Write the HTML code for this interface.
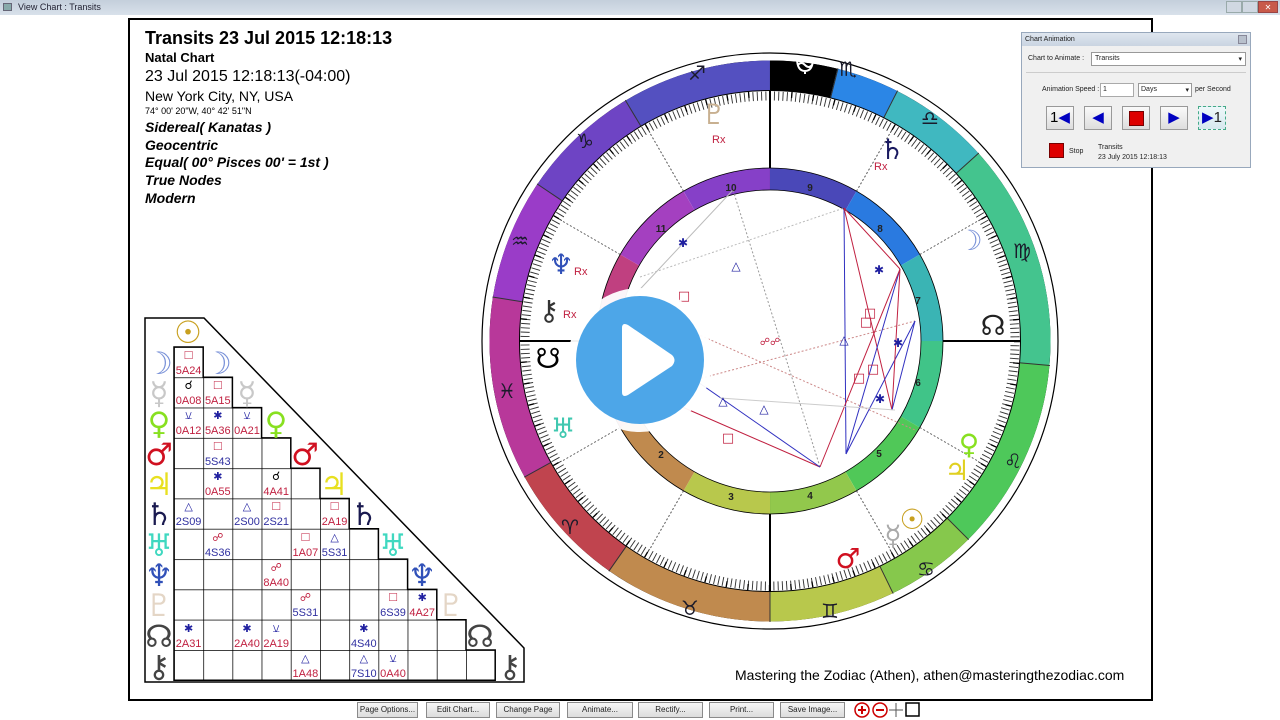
<!DOCTYPE html>
<html><head><meta charset="utf-8"><style>
*{margin:0;padding:0;box-sizing:border-box}
body{width:1280px;height:720px;overflow:hidden;background:#fff;font-family:"Liberation Sans",sans-serif;position:relative}
.tb{position:absolute;left:0;top:0;width:1280px;height:15px;background:linear-gradient(#c4cfdb,#d8e1ea);font-size:9px;color:#223;line-height:15px;padding-left:18px}
.frame{position:absolute;left:128px;top:18px;width:1025px;height:683px;border:2px solid #000}
.hd{position:absolute;left:145px;color:#000;white-space:nowrap}
.btn{position:absolute;top:702px;height:16px;border:1px solid #8a8a8a;background:linear-gradient(#f6f6f6,#dcdcdc);font-size:8px;line-height:14px;text-align:center;color:#222}
.pan{position:absolute;left:1021px;top:32px;width:230px;height:136px;background:#f0f0f0;border:1px solid #98a8bc;font-size:7px;color:#222}
</style></head><body>
<div class="tb">View Chart : Transits</div>
<div style="position:absolute;left:3px;top:3px;width:9px;height:8px;background:#8aa;border:1px solid #667"></div>
<div style="position:absolute;left:1226px;top:1px;width:16px;height:12px;background:#d0d8e2;border:1px solid #9aa"></div>
<div style="position:absolute;left:1242px;top:1px;width:16px;height:12px;background:#d0d8e2;border:1px solid #9aa"></div>
<div style="position:absolute;left:1258px;top:1px;width:20px;height:12px;background:#c85a4a;border:1px solid #944;color:#fff;font-size:8px;text-align:center;line-height:11px">✕</div>
<div class="frame"></div>

<div class="hd" style="top:28px;font-size:18px;font-weight:bold">Transits 23 Jul 2015 12:18:13</div>
<div class="hd" style="top:50px;font-size:13px;font-weight:bold">Natal Chart</div>
<div class="hd" style="top:68px;font-size:16px">23 Jul 2015 12:18:13(-04:00)</div>
<div class="hd" style="top:88px;font-size:14px">New York City, NY, USA</div>
<div class="hd" style="top:106px;font-size:9px">74° 00' 20"W, 40° 42' 51"N</div>
<div class="hd" style="top:119px;font-size:14px;font-weight:bold;font-style:italic">Sidereal( Kanatas )</div>
<div class="hd" style="top:137px;font-size:14px;font-weight:bold;font-style:italic">Geocentric</div>
<div class="hd" style="top:154px;font-size:14px;font-weight:bold;font-style:italic">Equal( 00° Pisces 00' = 1st )</div>
<div class="hd" style="top:172px;font-size:14px;font-weight:bold;font-style:italic">True Nodes</div>
<div class="hd" style="top:190px;font-size:14px;font-weight:bold;font-style:italic">Modern</div>

<svg width="1280" height="720" style="position:absolute;left:0;top:0" font-family="DejaVu Sans, sans-serif">
<defs>
<pattern id="g" patternUnits="userSpaceOnUse" x="174" y="347" width="29.2" height="30.3"><path d="M0 0H29.2M0 0V30.3" stroke="#000" stroke-width="1.5" fill="none"/></pattern>
</defs>
<polygon points="145,318 204,318 524,648 524,682 145,682" fill="#fff" stroke="#000" stroke-width="1.5"/>
<polygon points="174,347 203.2,347 203.2,377.3 232.4,377.3 232.4,407.6 261.6,407.6 261.6,437.9 290.8,437.9 290.8,468.2 320,468.2 320,498.5 349.2,498.5 349.2,528.8 378.4,528.8 378.4,559.1 407.6,559.1 407.6,589.4 436.8,589.4 436.8,619.7 466,619.7 466,650 495.2,650 495.2,680.3 174,680.3" fill="url(#g)" stroke="#000" stroke-width="1.5"/>
<g font-size="31" text-anchor="middle" font-weight="bold">
<text x="188" y="343" fill="#c8a020">☉</text>
<text x="159" y="374" fill="#7a92d8">☽</text><text x="218" y="374" fill="#7a92d8">☽</text>
<text x="159" y="404" fill="#c8c8c8">☿</text><text x="247" y="404" fill="#c8c8c8">☿</text>
<text x="159" y="434" fill="#88e020">♀</text><text x="276" y="434" fill="#88e020">♀</text>
<text x="159" y="465" fill="#d01020">♂</text><text x="305" y="465" fill="#d01020">♂</text>
<text x="159" y="495" fill="#e8e020">♃</text><text x="334" y="495" fill="#e8e020">♃</text>
<text x="159" y="525" fill="#1a1a50">♄</text><text x="364" y="525" fill="#1a1a50">♄</text>
<text x="159" y="556" fill="#40d8c0">♅</text><text x="393" y="556" fill="#40d8c0">♅</text>
<text x="159" y="586" fill="#3050b8">♆</text><text x="422" y="586" fill="#3050b8">♆</text>
<text x="159" y="616" fill="#e4d6c6">♇</text><text x="451" y="616" fill="#e4d6c6">♇</text>
<text x="159" y="647" fill="#444">☊</text><text x="480" y="647" fill="#444">☊</text>
<text x="159" y="677" fill="#444">⚷</text><text x="510" y="677" fill="#444">⚷</text>
</g>
<g font-size="11" text-anchor="middle" font-family="Liberation Sans, sans-serif">
<text x="188.6" y="359" fill="#c02040" font-size="13">□</text><text x="188.6" y="374" fill="#c02040">5A24</text>
<text x="188.6" y="389" fill="#000" font-size="12">☌</text><text x="188.6" y="404" fill="#c02040">0A08</text>
<text x="217.8" y="389" fill="#c02040" font-size="13">□</text><text x="217.8" y="404" fill="#c02040">5A15</text>
<text x="188.6" y="419" fill="#2020a0">⚺</text><text x="188.6" y="434" fill="#c02040">0A12</text>
<text x="217.8" y="419" fill="#2020a0">✱</text><text x="217.8" y="434" fill="#c02040">5A36</text>
<text x="247" y="419" fill="#2020a0">⚺</text><text x="247" y="434" fill="#c02040">0A21</text>
<text x="217.8" y="450" fill="#c02040" font-size="13">□</text><text x="217.8" y="465" fill="#3030a0">5S43</text>
<text x="217.8" y="480" fill="#2020a0">✱</text><text x="217.8" y="495" fill="#c02040">0A55</text>
<text x="276.2" y="480" fill="#000" font-size="12">☌</text><text x="276.2" y="495" fill="#c02040">4A41</text>
<text x="188.6" y="510" fill="#2020a0">△</text><text x="188.6" y="525" fill="#3030a0">2S09</text>
<text x="247" y="510" fill="#2020a0">△</text><text x="247" y="525" fill="#3030a0">2S00</text>
<text x="276.2" y="510" fill="#c02040" font-size="13">□</text><text x="276.2" y="525" fill="#3030a0">2S21</text>
<text x="334.6" y="510" fill="#c02040" font-size="13">□</text><text x="334.6" y="525" fill="#c02040">2A19</text>
<text x="217.8" y="541" fill="#c02040">☍</text><text x="217.8" y="556" fill="#3030a0">4S36</text>
<text x="305.4" y="541" fill="#c02040" font-size="13">□</text><text x="305.4" y="556" fill="#c02040">1A07</text>
<text x="334.6" y="541" fill="#2020a0">△</text><text x="334.6" y="556" fill="#3030a0">5S31</text>
<text x="276.2" y="571" fill="#c02040">☍</text><text x="276.2" y="586" fill="#c02040">8A40</text>
<text x="305.4" y="601" fill="#c02040">☍</text><text x="305.4" y="616" fill="#3030a0">5S31</text>
<text x="393" y="601" fill="#c02040" font-size="13">□</text><text x="393" y="616" fill="#3030a0">6S39</text>
<text x="422.2" y="601" fill="#2020a0">✱</text><text x="422.2" y="616" fill="#c02040">4A27</text>
<text x="188.6" y="632" fill="#2020a0">✱</text><text x="188.6" y="647" fill="#c02040">2A31</text>
<text x="247" y="632" fill="#2020a0">✱</text><text x="247" y="647" fill="#c02040">2A40</text>
<text x="276.2" y="632" fill="#2020a0">⚺</text><text x="276.2" y="647" fill="#c02040">2A19</text>
<text x="363.8" y="632" fill="#2020a0">✱</text><text x="363.8" y="647" fill="#3030a0">4S40</text>
<text x="305.4" y="662" fill="#2020a0">△</text><text x="305.4" y="677" fill="#c02040">1A48</text>
<text x="363.8" y="662" fill="#2020a0">△</text><text x="363.8" y="677" fill="#3030a0">7S10</text>
<text x="393" y="662" fill="#2020a0">⚺</text><text x="393" y="677" fill="#c02040">0A40</text>
</g>

<g transform="translate(770,341)">
<circle r="288" fill="#fff" stroke="#000" stroke-width="1.2"/>
<circle r="280" fill="none" stroke="#000" stroke-width="1"/>
<g fill="none" stroke-width="30">
<circle r="265.5" pathLength="360" stroke="#000" stroke-dasharray="14 346" transform="rotate(-90)"/>
<circle r="265.5" pathLength="360" stroke="#2b86e6" stroke-dasharray="13 347" transform="rotate(-76)"/>
<circle r="265.5" pathLength="360" stroke="#40b8c0" stroke-dasharray="21 339" transform="rotate(-63)"/>
<circle r="265.5" pathLength="360" stroke="#44c48e" stroke-dasharray="47 313" transform="rotate(-42)"/>
<circle r="265.5" pathLength="360" stroke="#4ec85a" stroke-dasharray="40 320" transform="rotate(5)"/>
<circle r="265.5" pathLength="360" stroke="#86c84c" stroke-dasharray="19 341" transform="rotate(45)"/>
<circle r="265.5" pathLength="360" stroke="#b8c84c" stroke-dasharray="26 334" transform="rotate(64)"/>
<circle r="265.5" pathLength="360" stroke="#c08a4e" stroke-dasharray="35 325" transform="rotate(90)"/>
<circle r="265.5" pathLength="360" stroke="#c0444e" stroke-dasharray="26 334" transform="rotate(125)"/>
<circle r="265.5" pathLength="360" stroke="#b8389a" stroke-dasharray="38 322" transform="rotate(151)"/>
<circle r="265.5" pathLength="360" stroke="#9a3cc8" stroke-dasharray="25 335" transform="rotate(-171)"/>
<circle r="265.5" pathLength="360" stroke="#6e44c4" stroke-dasharray="25 335" transform="rotate(-146)"/>
<circle r="265.5" pathLength="360" stroke="#5450c0" stroke-dasharray="31 329" transform="rotate(-121)"/>
</g>
<g stroke="#333" stroke-width="1">
<line x1="250" y1="0" x2="281" y2="0" transform="rotate(-76)"/>
<line x1="250" y1="0" x2="281" y2="0" transform="rotate(-63)"/><line x1="250" y1="0" x2="281" y2="0" transform="rotate(-42)"/>
<line x1="250" y1="0" x2="281" y2="0" transform="rotate(5)"/><line x1="250" y1="0" x2="281" y2="0" transform="rotate(45)"/>
<line x1="250" y1="0" x2="281" y2="0" transform="rotate(64)"/><line x1="250" y1="0" x2="281" y2="0" transform="rotate(90)"/>
<line x1="250" y1="0" x2="281" y2="0" transform="rotate(125)"/><line x1="250" y1="0" x2="281" y2="0" transform="rotate(151)"/>
<line x1="250" y1="0" x2="281" y2="0" transform="rotate(-171)"/><line x1="250" y1="0" x2="281" y2="0" transform="rotate(-146)"/>
<line x1="250" y1="0" x2="281" y2="0" transform="rotate(-121)"/>
</g>
<circle r="250.5" fill="#fff" stroke="#000" stroke-width="1"/>
<circle r="245" pathLength="360" fill="none" stroke="#333" stroke-width="9" stroke-dasharray="0.22 0.78"/>
<circle r="247" pathLength="72" fill="none" stroke="#000" stroke-width="6" stroke-dasharray="0.06 0.94"/>
<circle r="240" fill="#fff"/>
<g stroke="#555" stroke-width="1" stroke-dasharray="2 2">
<line x1="173" y1="0" x2="240" y2="0" transform="rotate(30)"/><line x1="173" y1="0" x2="240" y2="0" transform="rotate(60)"/>
<line x1="173" y1="0" x2="240" y2="0" transform="rotate(120)"/><line x1="173" y1="0" x2="240" y2="0" transform="rotate(150)"/>
<line x1="173" y1="0" x2="240" y2="0" transform="rotate(-30)"/><line x1="173" y1="0" x2="240" y2="0" transform="rotate(-60)"/>
<line x1="173" y1="0" x2="240" y2="0" transform="rotate(-120)"/><line x1="173" y1="0" x2="240" y2="0" transform="rotate(-150)"/>
</g>
<g stroke="#000" stroke-width="2"><line x1="0" y1="-250" x2="0" y2="250"/><line x1="-250" y1="0" x2="250" y2="0"/></g>
<g fill="none" stroke-width="22">
<circle r="162" pathLength="360" stroke="#4a48b8" stroke-dasharray="30 330" transform="rotate(-90)"/>
<circle r="162" pathLength="360" stroke="#2a7ae0" stroke-dasharray="30 330" transform="rotate(-60)"/>
<circle r="162" pathLength="360" stroke="#3ab4b4" stroke-dasharray="30 330" transform="rotate(-30)"/>
<circle r="162" pathLength="360" stroke="#40c488" stroke-dasharray="30 330" transform="rotate(0)"/>
<circle r="162" pathLength="360" stroke="#50c858" stroke-dasharray="30 330" transform="rotate(30)"/>
<circle r="162" pathLength="360" stroke="#92c84c" stroke-dasharray="30 330" transform="rotate(60)"/>
<circle r="162" pathLength="360" stroke="#b8c84c" stroke-dasharray="30 330" transform="rotate(90)"/>
<circle r="162" pathLength="360" stroke="#c08a4e" stroke-dasharray="30 330" transform="rotate(120)"/>
<circle r="162" pathLength="360" stroke="#c0445a" stroke-dasharray="30 330" transform="rotate(150)"/>
<circle r="162" pathLength="360" stroke="#c04080" stroke-dasharray="30 330" transform="rotate(180)"/>
<circle r="162" pathLength="360" stroke="#a440c0" stroke-dasharray="30 330" transform="rotate(210)"/>
<circle r="162" pathLength="360" stroke="#8640c8" stroke-dasharray="30 330" transform="rotate(240)"/>
</g>
<circle r="173" fill="none" stroke="#000" stroke-width="0.8"/>
<circle r="151" fill="#fff" stroke="#000" stroke-width="0.8"/>
</g>
<g stroke-width="1" fill="none">
<line x1="820" y1="467" x2="733" y2="190" stroke="#999" stroke-dasharray="2 2"/>
<line x1="640" y1="277" x2="844" y2="208" stroke="#bbb" stroke-dasharray="2 2"/>
<line x1="620" y1="400" x2="915" y2="321" stroke="#c88" stroke-dasharray="2 2"/>
<line x1="620" y1="300" x2="915" y2="430" stroke="#c88" stroke-dasharray="2 2"/>
<line x1="733" y1="190" x2="630" y2="300" stroke="#bbb"/>
<line x1="844" y1="208" x2="846" y2="454" stroke="#3030c0"/>
<line x1="844" y1="208" x2="892" y2="410" stroke="#c02040"/>
<line x1="844" y1="208" x2="900" y2="269" stroke="#c02040"/>
<line x1="900" y1="269" x2="846" y2="454" stroke="#3030c0"/>
<line x1="915" y1="321" x2="846" y2="454" stroke="#3030c0"/>
<line x1="900" y1="269" x2="892" y2="410" stroke="#c02040"/>
<line x1="900" y1="269" x2="820" y2="467" stroke="#c02040"/>
<line x1="915" y1="321" x2="892" y2="410" stroke="#3030c0"/>
<line x1="680" y1="406" x2="820" y2="467" stroke="#c02040"/>
<line x1="695" y1="380" x2="820" y2="467" stroke="#3030c0"/>
<line x1="720" y1="398" x2="895" y2="410" stroke="#ccc"/>
</g>
<g font-size="12" text-anchor="middle">
<text x="684" y="300" fill="#c02040" font-size="13">□</text><text x="870" y="317" fill="#c02040" font-size="13">□</text>
<text x="866" y="326" fill="#c02040" font-size="13">□</text><text x="873" y="373" fill="#c02040" font-size="13">□</text>
<text x="859" y="382" fill="#c02040" font-size="13">□</text><text x="728" y="442" fill="#c02040" font-size="13">□</text>
<text x="736" y="270" fill="#2020a0">△</text><text x="844" y="344" fill="#2020a0">△</text>
<text x="723" y="405" fill="#2020a0">△</text><text x="764" y="413" fill="#2020a0">△</text>
<text x="683" y="247" fill="#2020a0">✱</text><text x="879" y="274" fill="#2020a0">✱</text>
<text x="898" y="347" fill="#2020a0">✱</text><text x="880" y="403" fill="#2020a0">✱</text>
<text x="770" y="345" fill="#c02040" font-size="10">☍☍</text>
</g>
<g font-size="10" font-weight="bold" text-anchor="middle" fill="#222" font-family="Liberation Sans, sans-serif">
<text x="731" y="191">10</text><text x="810" y="191">9</text><text x="880" y="232">8</text><text x="918" y="304">7</text>
<text x="918" y="386">6</text><text x="879" y="457">5</text><text x="810" y="499">4</text><text x="731" y="500">3</text>
<text x="661" y="458">2</text><text x="661" y="232">11</text>
</g>
<!-- ophiuchus icon -->
<path d="M797 58 Q797 71 805 71 Q813 71 813 58 M798 65 Q801 61 805 65 Q809 69 812 65 M805 71 V74" stroke="#fff" stroke-width="2" fill="none"/>
<g font-size="20" font-weight="bold" text-anchor="middle" fill="#1a1a2a">
<text x="697" y="80">♐&#xFE0E;</text><text x="848" y="76">♏&#xFE0E;</text>
<text x="930" y="125">♎&#xFE0E;</text><text x="1022" y="258">♍&#xFE0E;</text><text x="1013" y="468">♌&#xFE0E;</text>
<text x="926" y="576">♋&#xFE0E;</text><text x="830" y="618">♊&#xFE0E;</text><text x="690" y="615">♉&#xFE0E;</text>
<text x="570" y="534">♈&#xFE0E;</text><text x="507" y="398">♓&#xFE0E;</text><text x="520" y="248">♒&#xFE0E;</text><text x="585" y="148">♑&#xFE0E;</text>
</g>
<g font-size="28" text-anchor="middle" font-weight="bold">
<text x="714" y="124" fill="#c8b090">♇</text><text x="892" y="159" fill="#1a1a60">♄</text>
<text x="970" y="250" fill="#7a92d8">☽</text><text x="561" y="274" fill="#3050b8">♆</text>
<text x="549" y="320" fill="#333">⚷</text><text x="548" y="368" fill="#000">☋</text>
<text x="563" y="438" fill="#40c8b0">♅</text><text x="969" y="454" fill="#88e020">♀</text>
<text x="957" y="480" fill="#e0d020">♃</text><text x="912" y="529" fill="#c8a020">☉</text>
<text x="893" y="545" fill="#aaa">☿</text><text x="848" y="568" fill="#d01020">♂</text>
<text x="993" y="335" fill="#222">☊</text>
</g>
<g font-size="11" fill="#c02040" font-family="Liberation Sans, sans-serif">
<text x="712" y="143">Rx</text><text x="874" y="170">Rx</text><text x="574" y="275">Rx</text><text x="563" y="318">Rx</text>
</g>
<circle cx="640" cy="360" r="72" fill="#fff" opacity="0.95"/>
<circle cx="640" cy="360" r="64" fill="#4da6e8"/>
<path d="M622 328 L622 392 Q622 398 628 395 L672 366 Q677 360 672 355 L628 325 Q622 322 622 328Z" fill="#fff"/>
<text x="735" y="680" font-size="14" font-family="Liberation Sans, sans-serif" fill="#000">Mastering the Zodiac (Athen), athen@masteringthezodiac.com</text>
<circle cx="862" cy="710" r="7" fill="#fff" stroke="#c00" stroke-width="1.5"/><path d="M858 710h8M862 706v8" stroke="#c00" stroke-width="2"/>
<circle cx="880" cy="710" r="7" fill="#fff" stroke="#c00" stroke-width="1.5"/><path d="M876 710h8" stroke="#c00" stroke-width="2"/>
<path d="M896 703v14M889 710h14" stroke="#555" stroke-width="1"/>
<rect x="906" y="703" width="13" height="13" fill="#fff" stroke="#000" stroke-width="1.5"/>
</svg>

<div class="pan">
<div style="height:13px;background:linear-gradient(#dfe6ef,#c9d4e1);padding-left:3px;line-height:13px">Chart Animation</div>
<div style="position:absolute;right:3px;top:2px;width:9px;height:9px;background:#b8c0cc;border:1px solid #889"></div>
<div style="position:absolute;left:6px;top:22px">Chart to Animate :</div>
<div style="position:absolute;left:69px;top:19px;width:155px;height:14px;background:#fff;border:1px solid #999;padding:2px 3px">Transits<span style="position:absolute;right:3px">▾</span></div>
<div style="position:absolute;left:4px;top:39px;width:220px;border-top:1px solid #ccc"></div>
<div style="position:absolute;left:20px;top:53px">Animation Speed :</div>
<div style="position:absolute;left:78px;top:50px;width:34px;height:14px;background:#fff;border:1px solid #aaa;padding:2px">1</div>
<div style="position:absolute;left:116px;top:50px;width:54px;height:14px;background:#fff;border:1px solid #999;padding:2px">Days<span style="position:absolute;right:2px">▾</span></div>
<div style="position:absolute;left:173px;top:53px">per Second</div>
<div style="position:absolute;left:24px;top:73px;width:28px;height:24px;border:1px solid #999;background:linear-gradient(#fafafa,#ddd);font-size:15px;line-height:22px;text-align:center"><span style="color:#000">1</span><span style="color:#0000c0">◀</span></div>
<div style="position:absolute;left:62px;top:73px;width:28px;height:24px;border:1px solid #999;background:linear-gradient(#fafafa,#ddd);font-size:15px;line-height:22px;text-align:center;color:#0000c0">◀</div>
<div style="position:absolute;left:100px;top:73px;width:28px;height:24px;border:1px solid #999;background:linear-gradient(#fafafa,#ddd)"><div style="margin:4px auto;width:15px;height:15px;background:#d00;border:1px solid #700"></div></div>
<div style="position:absolute;left:138px;top:73px;width:28px;height:24px;border:1px solid #999;background:linear-gradient(#fafafa,#ddd);font-size:15px;line-height:22px;text-align:center;color:#0000c0">▶</div>
<div style="position:absolute;left:176px;top:73px;width:28px;height:24px;border:1px dashed #4a8;background:linear-gradient(#eef8fa,#d6e8ee);font-size:15px;line-height:22px;text-align:center"><span style="color:#0000c0">▶</span>1</div>
<div style="position:absolute;left:27px;top:110px;width:15px;height:15px;background:#d00;border:1px solid #700"></div>
<div style="position:absolute;left:47px;top:115px">Stop</div>
<div style="position:absolute;left:76px;top:110px;line-height:10px">Transits<br>23 July 2015 12:18:13</div>
</div>

<div class="btn" style="left:357px;width:61px">Page Options...</div>
<div class="btn" style="left:426px;width:64px">Edit Chart...</div>
<div class="btn" style="left:496px;width:64px">Change Page</div>
<div class="btn" style="left:567px;width:66px">Animate...</div>
<div class="btn" style="left:638px;width:65px">Rectify...</div>
<div class="btn" style="left:709px;width:65px">Print...</div>
<div class="btn" style="left:780px;width:65px">Save Image...</div>
</body></html>
